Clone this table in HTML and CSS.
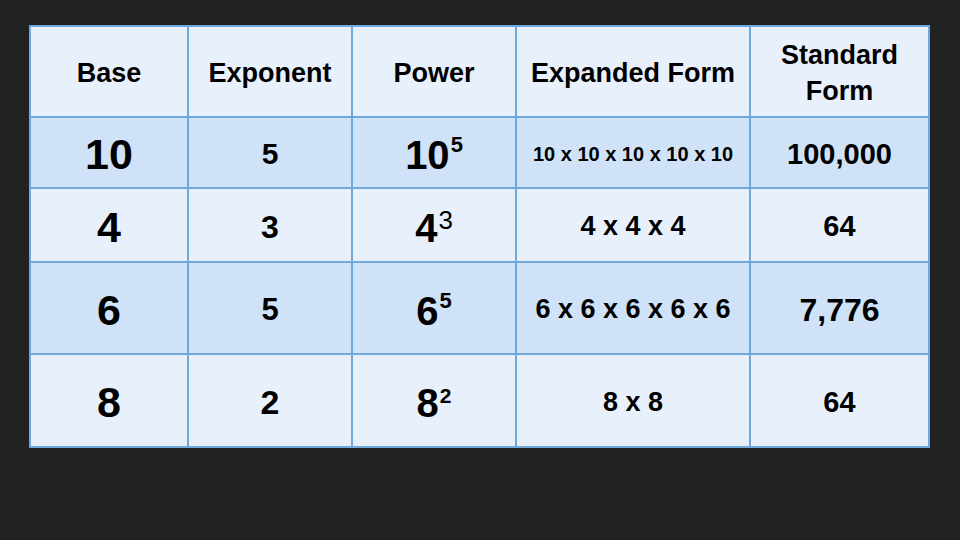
FILE: index.html
```html
<!DOCTYPE html>
<html lang="en">
<head>
<meta charset="utf-8">
<title>Exponents</title>
<link rel="stylesheet" href="styles.css">
</head>
<body>
<div class="table">
  <div class="cell head">Base</div>
  <div class="cell head">Exponent</div>
  <div class="cell head">Power</div>
  <div class="cell head">Expanded Form</div>
  <div class="cell head">Standard Form</div>

  <div class="cell dark big">10</div>
  <div class="cell dark mid s30">5</div>
  <div class="cell dark pow"><span>10<span class="sup">5</span></span></div>
  <div class="cell dark small">10 x 10 x 10 x 10 x 10</div>
  <div class="cell dark std s29">100,000</div>

  <div class="cell big">4</div>
  <div class="cell mid s32">3</div>
  <div class="cell pow"><span>4<span class="sup thin">3</span></span></div>
  <div class="cell exp">4 x 4 x 4</div>
  <div class="cell std s29">64</div>

  <div class="cell dark big">6</div>
  <div class="cell dark mid s31">5</div>
  <div class="cell dark pow"><span>6<span class="sup">5</span></span></div>
  <div class="cell dark exp">6 x 6 x 6 x 6 x 6</div>
  <div class="cell dark std s32">7,776</div>

  <div class="cell big">8</div>
  <div class="cell mid s34">2</div>
  <div class="cell pow"><span>8<span class="sup low">2</span></span></div>
  <div class="cell exp">8 x 8</div>
  <div class="cell std s29">64</div>
</div>
</body>
</html>
```
FILE: styles.css
```css
html, body {
  margin: 0;
  padding: 0;
  background: #222222;
  width: 960px;
  height: 540px;
  overflow: hidden;
}
body {
  padding: 25px 0 0 29px;
  box-sizing: border-box;
  font-family: "Liberation Sans", Arial, sans-serif;
  font-weight: bold;
  color: #000;
}
.table {
  display: grid;
  grid-template-columns: 156px 162px 162px 232px 177px;
  grid-template-rows: 89px 69px 72px 90px 91px;
  gap: 2px;
  padding: 2px;
  width: max-content;
  background: #6fa8dc;
}
.cell {
  display: flex;
  align-items: center;
  justify-content: center;
  text-align: center;
  background: #e8f1fb;
  line-height: 1;
}
.cell.dark { background: #cfe2f7; }
.head {
  font-size: 27px;
  line-height: 36px;
  padding: 3px 6px 0;
}
.big { font-size: 43px; padding-top: 4px; }
.pow { font-size: 40px; padding-top: 4px; }
.mid { padding-top: 3px; }
.s29 { font-size: 29px; }
.s30 { font-size: 30px; }
.s31 { font-size: 31px; }
.s32 { font-size: 32px; }
.s34 { font-size: 34px; }
.small { font-size: 20px; padding-top: 2px; }
.exp { font-size: 27px; padding-top: 3px; }
.std { padding-top: 3px; }
.sup {
  font-size: 22px;
  vertical-align: 17px;
  margin-left: 1px;
}
.sup.thin {
  font-weight: normal;
  font-size: 26px;
  vertical-align: 13px;
}
.sup.low {
  font-size: 21px;
  vertical-align: 14px;
}
```
